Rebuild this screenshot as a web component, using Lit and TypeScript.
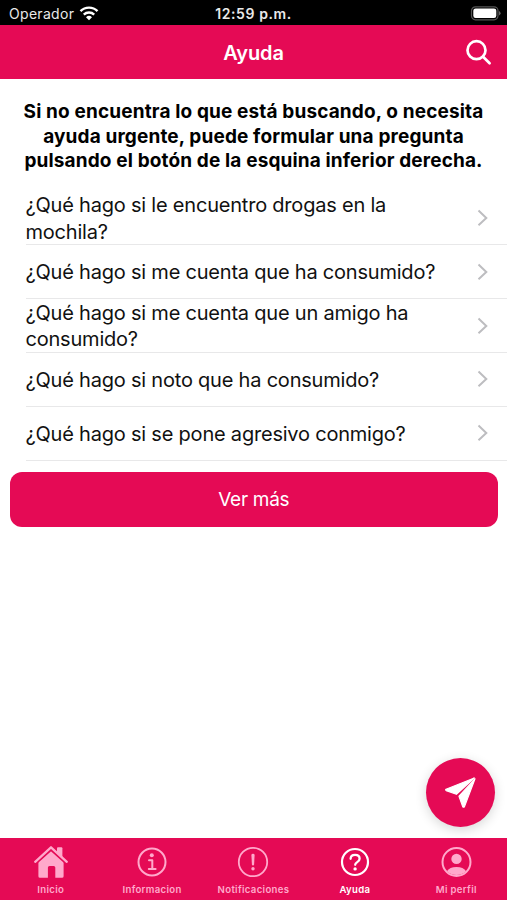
import { LitElement, html, css, svg } from "lit";
import { customElement, property } from "lit/decorators.js";
import { classMap } from "lit/directives/class-map.js";

const questions = [
  "¿Qué hago si le encuentro drogas en la mochila?",
  "¿Qué hago si me cuenta que ha consumido?",
  "¿Qué hago si me cuenta que un amigo ha consumido?",
  "¿Qué hago si noto que ha consumido?",
  "¿Qué hago si se pone agresivo conmigo?",
];

const ring = svg`<circle cx="18" cy="18" r="13.5" fill="none" stroke="currentColor" stroke-width="2"/>`;

const tabs = [
  {
    label: "Inicio",
    icon: svg`
      <path fill="currentColor" d="M18 6.6 30.6 17.4V32.2q0 1.6-1.6 1.6H22.300V23.600q0-1.600-1.600-1.600H16.500Q14.900 22 14.900 23.600v10.200H7q-1.6 0-1.6-1.6V17.400z"/>
      <path fill="none" stroke="#e50a55" stroke-width="4.400" d="M1.8 18.800 18 4.400 34.2 18.800"/>
      <path fill="none" stroke="currentColor" stroke-width="2.3" stroke-linecap="round" stroke-linejoin="round" d="M2.2 17.800 18 3.300 33.800 17.800"/>
      <path fill="currentColor" d="M24 9V4.200q0-1 1-1h3.400q1 0 1 1V13.800z"/>`,
  },
  {
    label: "Informacion",
    icon: svg`${ring}<circle cx="17.800" cy="11.3" r="2" fill="currentColor"/>
      <path fill="none" stroke="currentColor" stroke-width="2" stroke-linecap="round" stroke-linejoin="round" d="M15 16.3H18.300V24.800M14.800 24.900H21.600"/>`,
  },
  {
    label: "Notificaciones",
    icon: svg`<circle cx="18" cy="18" r="14.2" fill="none" stroke="currentColor" stroke-width="1.8"/>
      <path d="M16.4 11.1q0-1.3 1.6-1.3t1.6 1.3L19.1 20.600q-.1 1-1.1 1t-1.1-1z" fill="currentColor"/>
      <circle cx="18" cy="24.700" r="1.7" fill="currentColor"/>`,
  },
  {
    label: "Ayuda",
    active: true,
    icon: svg`<circle cx="18" cy="18" r="13" fill="none" stroke="currentColor" stroke-width="2.2"/>
      <path fill="none" stroke="currentColor" stroke-width="2.3" stroke-linecap="round" stroke-linejoin="round" d="M13.600 14.800c0-2.600 1.900-4 4.500-4s4.500 1.500 4.500 3.900c0 3.400-4.400 3.300-4.400 6.100"/>
      <circle cx="18.1" cy="24.900" r="1.7" fill="currentColor"/>`,
  },
  {
    label: "Mi perfil",
    icon: svg`<circle cx="18.500" cy="18" r="14" fill="none" stroke="currentColor" stroke-width="2"/>
      <circle cx="18.500" cy="14.900" r="5.2" fill="currentColor"/>
      <path fill="currentColor" d="M8.900 27.300c1.7-3 5-4.4 9.6-4.4s7.9 1.400 9.600 4.400a14 14 0 0 1-19.200 0z"/>`,
  },
];

@customElement("status-bar")
class StatusBar extends LitElement {
  static styles = css`
    :host {
      display: grid;
      grid-template-columns: 1fr auto 1fr;
      align-items: center;
      height: 25px;
      box-sizing: border-box;
      padding: 2px 6px 0 9px;
      background: #000;
      color: #e9e9e9;
      font-size: 14px;
    }
    .carrier { display: flex; align-items: center; gap: 5px; letter-spacing: 0.3px; }
    .time { margin-right: 3px; font-weight: 600; letter-spacing: 0.58px; }
    .battery { justify-self: end; }
    svg { display: block; }
  `;
  render() {
    return html`
      <div class="carrier">
        <span>Operador</span>
        <svg width="20" height="15" viewBox="0 0 20 15" fill="none" stroke="#fff" stroke-width="2.4">
          <path d="M1.500 5.200a12 12 0 0 1 17 0M4.800 8.700a7.400 7.400 0 0 1 10.400 0"/>
          <path fill="#fff" stroke="none" d="M7 11.200a4.300 4.300 0 0 1 6 0L10 14.300z"/>
        </svg>
      </div>
      <span class="time">12:59 p.m.</span>
      <svg class="battery" width="31" height="15" viewBox="0 0 31 15">
        <rect x="1.500" y=".8" width="26.500" height="13" rx="4" fill="none" stroke="#555" stroke-width="1.200"/>
        <rect x="3.300" y="2.500" width="23" height="9.600" rx="2.300" fill="#fff"/>
        <path d="M29 5v4.600q1.600-.8 1.600-2.300T29 5z" fill="#666"/>
      </svg>`;
  }
}

@customElement("question-row")
class QuestionRow extends LitElement {
  @property() text = "";
  static styles = css`
    :host {
      display: flex;
      align-items: center;
      justify-content: space-between;
      box-sizing: border-box;
      height: 53.85px;
      margin-left: 25.5px;
      padding-right: 18px;
      border-bottom: 1px solid #e8e8e9;
    }
    .text { width: 424px; padding-top: 1.5px; font-size: 20px; line-height: 26.6px; letter-spacing: -0.21px; color: #111; }
    svg { display: block; }
  `;
  render() {
    return html`
      <span class="text">${this.text}</span>
      <svg width="13" height="18" viewBox="0 0 13 18" fill="none" stroke="#bdbdc0" stroke-width="2">
        <path d="M2.500 1.600 10.300 8.900 2.500 16.200"/>
      </svg>`;
  }
}

@customElement("app-root")
class AppRoot extends LitElement {
  static styles = css`
    :host {
      display: flex;
      flex-direction: column;
      position: relative;
      height: 900px;
      overflow: hidden;
      background: #fff;
      font-family: Inter, "Liberation Sans", sans-serif;
    }
    .header {
      display: grid;
      grid-template-columns: 1fr auto 1fr;
      align-items: center;
      height: 54px;
      box-sizing: border-box;
      padding: 0 15px;
      background: #e50a55;
      color: #fff;
    }
    .title { grid-column: 2; font-size: 20px; font-weight: 600; letter-spacing: -0.1px; padding-top: 1px; }
    .search { justify-self: end; }
    svg { display: block; }
    .content { flex: 1; }
    .intro {
      margin: 21px 0 0;
      height: 91.4px;
      text-align: center;
      font-size: 19px;
      font-weight: 700;
      line-height: 24.5px;
      letter-spacing: 0.14px;
      color: #000;
    }
    .line { display: block; white-space: nowrap; }
    .more {
      display: flex;
      align-items: center;
      justify-content: center;
      width: calc(100% - 18.5px);
      height: 54.500px;
      margin: 11.400px 9px 0 9.500px;
      padding: 1px 0 0;
      border: 0;
      border-radius: 12px;
      background: #e50a55;
      color: #fff;
      font: 400 19px Inter, "Liberation Sans", sans-serif;
      letter-spacing: -0.3px;
    }
    .fab {
      position: absolute;
      right: 12px;
      bottom: 73.5px;
      width: 69px;
      height: 69px;
      padding: 0;
      border: 0;
      border-radius: 50%;
      background: #e50a55;
      box-shadow: 0 3px 12px rgba(0, 0, 0, 0.16);
    }
    .tabs {
      display: grid;
      grid-template-columns: repeat(5, 1fr);
      height: 62px;
      background: #e50a55;
    }
    .tab {
      display: flex;
      flex-direction: column;
      align-items: center;
      padding-top: 6px;
      gap: 4px;
      color: #ffa9cb;
      font-size: 9.6px;
      font-weight: 600;
      line-height: 12px;
      letter-spacing: 0.32px;
    }
    .active { color: #fff; }
  `;
  render() {
    return html`
      <status-bar></status-bar>
      <div class="header">
        <span class="title">Ayuda</span>
        <svg class="search" width="27" height="27" viewBox="0 0 27 27" fill="none" stroke="#fff" stroke-width="2.700" stroke-linecap="round">
          <circle cx="11.500" cy="11.200" r="9"/><path d="M18.300 18 24.600 24.200"/>
        </svg>
      </div>
      <div class="content">
        <p class="intro">
          <span class="line">Si no encuentra lo que está buscando, o necesita</span>
          <span class="line">ayuda urgente, puede formular una pregunta</span>
          <span class="line">pulsando el botón de la esquina inferior derecha.</span>
        </p>
        ${questions.map((q) => html`<question-row .text=${q}></question-row>`)}
        <button class="more">Ver más</button>
      </div>
      <button class="fab" aria-label="Enviar pregunta">
        <svg width="69" height="69" viewBox="0 0 69 69" fill="#fff" stroke="#fff" stroke-width="1.200" stroke-linejoin="round">
          <path d="M48.300 20 20 31.200q-.8.700.2 1.400L30.400 36.300z"/>
          <path d="M49 20.800 33 38.200 36.700 48.600q.9 1.300 1.800 0z"/>
        </svg>
      </button>
      <nav class="tabs">
        ${tabs.map(
          (t) => html`<div class=${classMap({ tab: true, active: !!t.active })}>
            <svg width="36" height="36" viewBox="0 0 36 36">${t.icon}</svg>
            <span>${t.label}</span>
          </div>`
        )}
      </nav>`;
  }
}
